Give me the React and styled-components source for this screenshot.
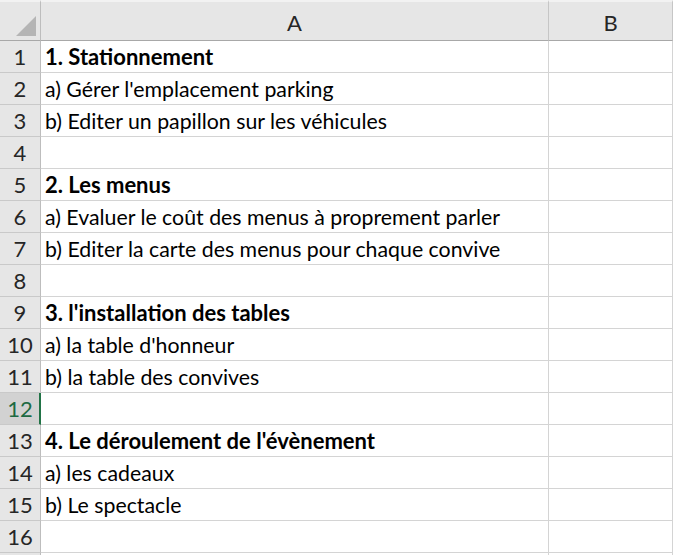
import React from "react";
import styled, { createGlobalStyle } from "styled-components";

const Global = createGlobalStyle`
  html, body { margin: 0; padding: 0; background: #ffffff; }
  body { font-family: "Lato", "Noto Sans", sans-serif; overflow: hidden; }
`;

const Sheet = styled.div`
  display: grid;
  grid-template-columns: 41px 508px 1fr;
  width: 673px;
  height: 555px;
  overflow: hidden;
  font-family: "Lato", "Noto Sans", sans-serif;
  font-size: 22px;
  color: #000;
`;

const Corner = styled.div`
  box-sizing: border-box;
  height: 41px;
  background: #e6e6e6;
  border-top: 2px solid #f2f2f2;
  border-right: 1px solid #bdbdbd;
  border-bottom: 1px solid #a8a8a8;
  display: flex;
  align-items: flex-end;
  justify-content: flex-end;
  padding: 0 4px 4px 0;
`;

const ColHead = styled.div`
  box-sizing: border-box;
  height: 41px;
  background: #e6e6e6;
  border-top: 2px solid #f2f2f2;
  border-right: 1px solid #c6c6c6;
  border-bottom: 1px solid #a8a8a8;
  display: flex;
  align-items: center;
  justify-content: center;
  color: #262626;
  padding-top: 2px;
`;

const RowHead = styled.div`
  box-sizing: border-box;
  height: 32px;
  background: ${(p) => (p.$active ? "#d2d2d2" : "#e6e6e6")};
  color: ${(p) => (p.$active ? "#1e6a43" : "#262626")};
  border-right: ${(p) => (p.$active ? "2px solid #217346" : "1px solid #bdbdbd")};
  border-bottom: 1px solid #c9c9c9;
  display: flex;
  align-items: center;
  justify-content: center;
  padding-left: ${(p) => (p.$active ? "1px" : "0")};
`;

const Cell = styled.div`
  box-sizing: border-box;
  height: 32px;
  border-right: 1px solid #d4d4d4;
  border-bottom: 1px solid #d4d4d4;
  display: flex;
  align-items: center;
  padding-left: 4px;
  white-space: nowrap;
  font-weight: ${(p) => (p.$bold ? 700 : 400)};
  font-size: ${(p) => (p.$bold ? "22px" : "21.3px")};
`;

const rows = [
  { a: "1. Stationnement", bold: true },
  { a: "a) Gérer l'emplacement parking" },
  { a: "b) Editer un papillon sur les véhicules" },
  { a: "" },
  { a: "2. Les menus", bold: true },
  { a: "a) Evaluer le coût des menus à proprement parler" },
  { a: "b) Editer la carte des menus pour chaque convive" },
  { a: "" },
  { a: "3. l'installation des tables", bold: true },
  { a: "a) la table d'honneur" },
  { a: "b) la table des convives" },
  { a: "", active: true },
  { a: "4. Le déroulement de l'évènement", bold: true },
  { a: "a) les cadeaux" },
  { a: "b) Le spectacle" },
  { a: "" },
  { a: "", hidden: true },
];

export default function App() {
  return (
    <>
      <Global />
      <Sheet>
        <Corner>
          <svg width="20" height="20" viewBox="0 0 20 20">
            <polygon points="20,0 20,20 0,20" fill="#b5b5b5" />
          </svg>
        </Corner>
        <ColHead>A</ColHead>
        <ColHead>B</ColHead>
        {rows.map((r, i) => (
          <React.Fragment key={i}>
            <RowHead $active={r.active}>{r.hidden ? "" : i + 1}</RowHead>
            <Cell $bold={r.bold}>{r.a}</Cell>
            <Cell />
          </React.Fragment>
        ))}
      </Sheet>
    </>
  );
}
